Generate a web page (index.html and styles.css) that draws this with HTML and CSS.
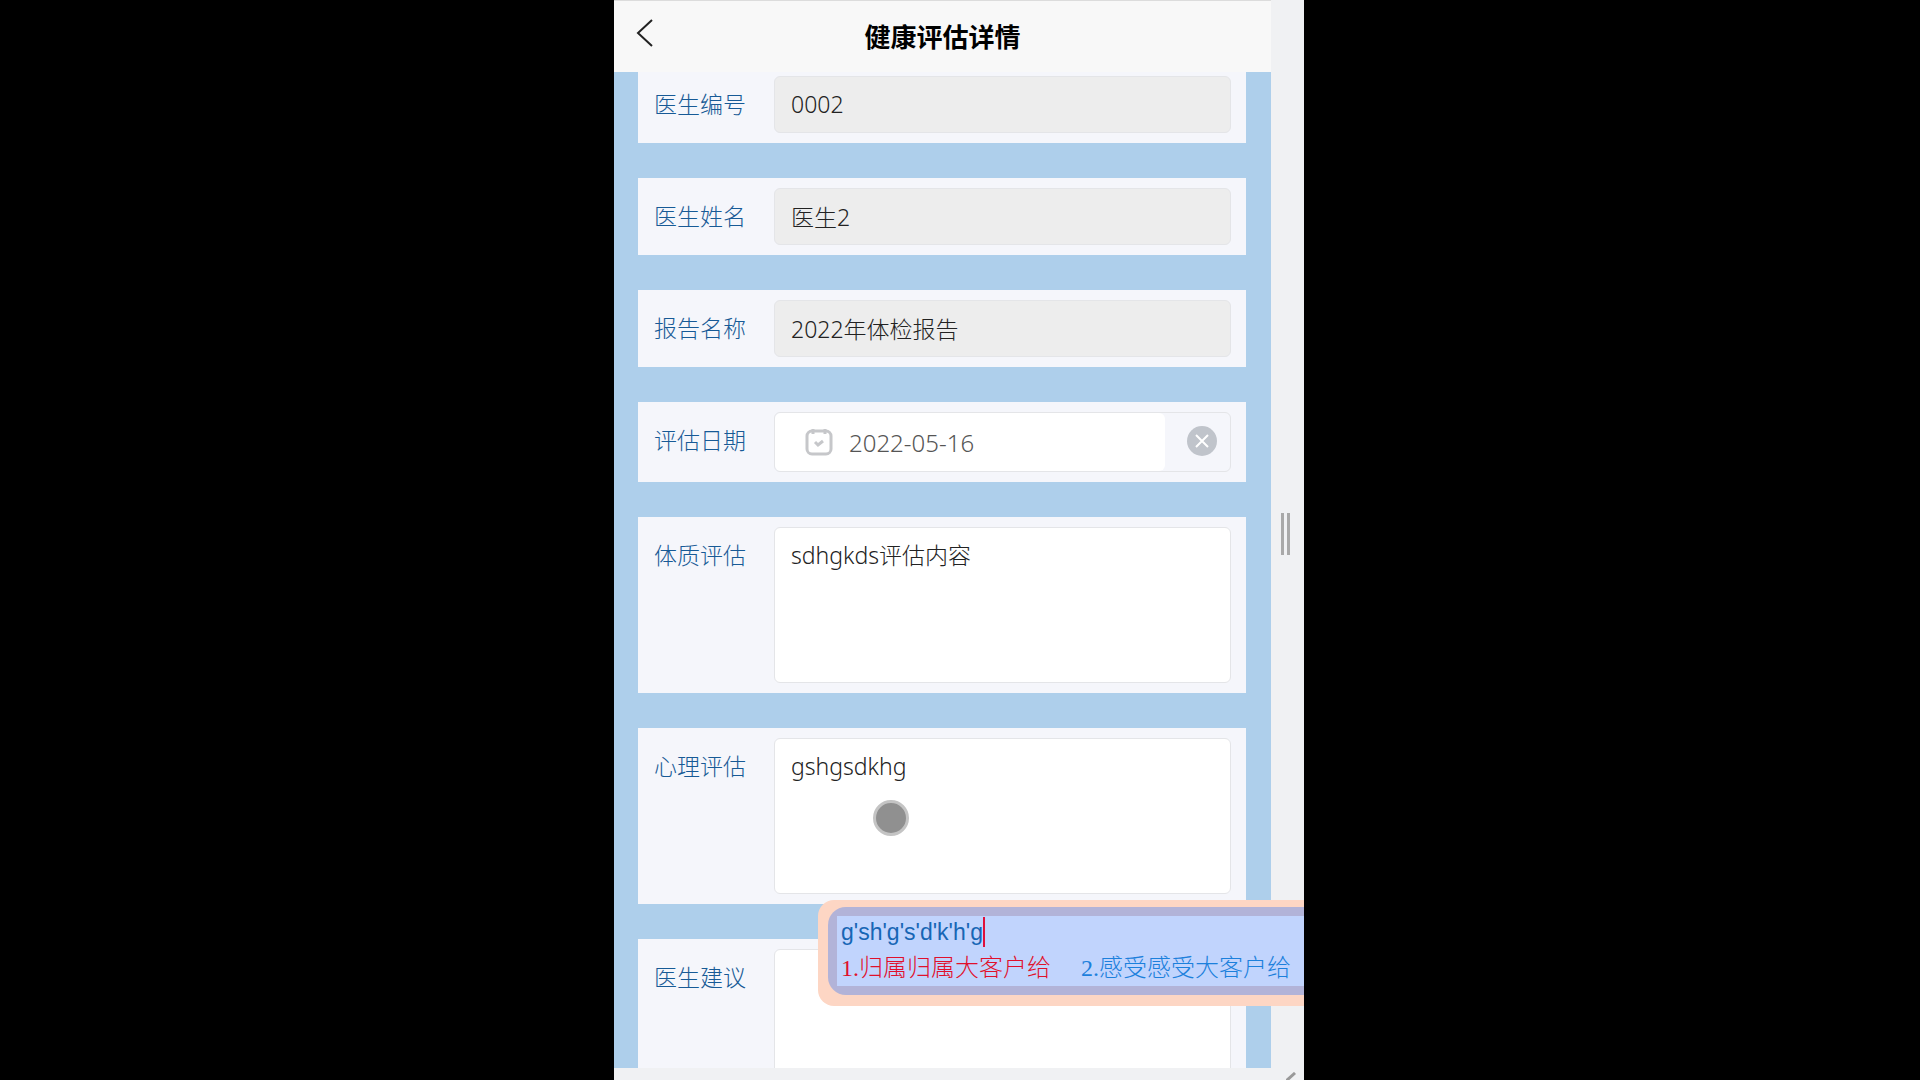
FILE: index.html
```html
<!DOCTYPE html>
<html lang="zh-CN">

<head>
    <meta charset="UTF-8">
    <meta name="viewport" content="width=device-width, initial-scale=1.0">
    <title>健康评估详情</title>
    <link rel="stylesheet" href="styles.css">
</head>

<body>
    <div class="device">
        <div class="main">
            <div class="screen">
                <header class="navbar">
                    <button type="button" class="back" aria-label="返回">
                        <svg width="18" height="30" viewBox="0 0 18 30"><path d="M16 2 L2 15 L16 28" /></svg>
                    </button>
                    <h1>健康评估详情</h1>
                </header>

                <form class="form">
                    <div class="row row-cut">
                        <label for="doctorNo">医生编号</label>
                        <input type="text" id="doctorNo" class="field" value="0002" readonly>
                    </div>
                    <div class="row">
                        <label for="doctorName">医生姓名</label>
                        <input type="text" id="doctorName" class="field" value="医生2" readonly>
                    </div>
                    <div class="row">
                        <label for="reportName">报告名称</label>
                        <input type="text" id="reportName" class="field" value="2022年体检报告" readonly>
                    </div>
                    <div class="row">
                        <label for="evalDate">评估日期</label>
                        <div class="date">
                            <div class="date-value">
                                <svg class="calendar" width="28" height="28" viewBox="0 0 28 28">
                                    <rect x="2" y="3" width="24" height="23" rx="5" />
                                    <path d="M8 1 V6 M20 1 V6 M10 14 L13 17 L18 13" />
                                </svg>
                                <input type="text" id="evalDate" value="2022-05-16">
                            </div>
                            <button type="button" class="clear" aria-label="清除">
                                <svg width="30" height="30" viewBox="0 0 30 30">
                                    <circle cx="15" cy="15" r="15" />
                                    <path d="M9 9 L21 21 M21 9 L9 21" />
                                </svg>
                            </button>
                        </div>
                    </div>
                    <div class="row">
                        <label for="bodyEval">体质评估</label>
                        <textarea id="bodyEval" class="field">sdhgkds评估内容</textarea>
                    </div>
                    <div class="row">
                        <label for="mindEval">心理评估</label>
                        <textarea id="mindEval" class="field">gshgsdkhg</textarea>
                    </div>
                    <div class="row">
                        <label for="advice">医生建议</label>
                        <textarea id="advice" class="field"></textarea>
                    </div>
                </form>
            </div>
            <div class="rail">
                <span class="bar"></span>
                <span class="bar"></span>
            </div>
        </div>
        <div class="bottom">
            <svg width="10" height="8" viewBox="0 0 10 8"><path d="M0 9 L9 1" /></svg>
        </div>

        <!-- touch point -->
        <span class="touch"></span>

        <!-- input method window -->
        <div class="ime">
            <div class="ime-inner">
                <div class="pinyin">g'sh'g's'd'k'h'g</div>
                <div class="candidates">
                    <button type="button" class="active">1.归属归属大客户给</button>
                    <button type="button">2.感受感受大客户给</button>
                </div>
            </div>
        </div>
    </div>
</body>

</html>
```
FILE: styles.css
```css
* {
    box-sizing: border-box;
}
body {
    margin: 0;
    padding-right: 2px;
    background-color: #000;
    font-family: "Noto Sans", "Noto Sans CJK SC", sans-serif;
    font-size: 23px;
}
input, textarea, button {
    font-family: inherit;
    font-size: inherit;
    margin: 0;
}
button {
    padding: 0;
    border: none;
    background: none;
    cursor: pointer;
}
svg {
    display: block;
    fill: none;
}
.device {
    position: relative;
    display: flex;
    flex-direction: column;
    max-width: 690px;
    height: 100vh;
    margin: 0 auto;
    overflow: hidden;
    background-color: #f0f1f3;
}
.main {
    flex: 1;
    min-height: 0;
    display: flex;
}
.screen {
    flex: 1;
    min-width: 0;
    display: flex;
    flex-direction: column;
    overflow: hidden;
    background-color: #aecfeb;
}

/* header */
.navbar {
    flex: none;
    display: grid;
    grid-template-columns: 64px 1fr 64px;
    align-items: center;
    height: 72px;
    border-top: 1px solid #dcdcdc;
    background-color: #f8f8f8;
}
.back {
    padding: 0 0 8px 22px;
}
.back path {
    stroke: #222;
    stroke-width: 2;
}
h1 {
    margin: 0;
    font-size: 26px;
    line-height: 36px;
    font-weight: bold;
    text-align: center;
    color: #000;
}

/* form */
.form {
    display: flex;
    flex-direction: column;
    gap: 35px;
    padding: 0 25px 0 24px;
}
.row {
    display: flex;
    align-items: flex-start;
    padding: 10px 15px 10px 16px;
    background-color: #f5f6fb;
}
.row-cut {
    padding-top: 4px;
}
label {
    flex: none;
    width: 120px;
    line-height: 56px;
    font-weight: 300;
    color: #175a96;
}
.field {
    flex: 1;
    min-width: 0;
    height: 57px;
    padding: 0 16px 2px;
    border: 1px solid #e4e5e8;
    border-radius: 6px;
    outline: none;
    background-color: #fff;
    font-weight: 300;
    color: #222;
}
input.field {
    background-color: #ededed;
}
textarea.field {
    height: 156px;
    padding: 10px 16px;
    line-height: 34px;
    resize: none;
}
.date {
    flex: 1;
    min-width: 0;
    display: flex;
    height: 60px;
    border: 1px solid #e4e5e8;
    border-radius: 6px;
}
.date-value {
    flex: 1;
    min-width: 0;
    display: flex;
    align-items: center;
    gap: 16px;
    padding-left: 30px;
    border-radius: 6px;
    background-color: #fff;
}
.date-value input {
    flex: 1;
    min-width: 0;
    padding: 0;
    border: none;
    outline: none;
    background: none;
    font-size: 24px;
    font-weight: 300;
    color: #555;
}
.calendar {
    flex: none;
    stroke: #c6c7ca;
    stroke-width: 3;
}
.clear {
    padding: 0 13px 2px 22px;
}
.clear circle {
    fill: #c0c4cb;
}
.clear path {
    stroke: #fff;
    stroke-width: 2;
}

/* side rail and bottom strip */
.rail {
    flex: none;
    display: flex;
    justify-content: center;
    align-items: center;
    gap: 3px;
    width: 33px;
    padding-right: 4px;
}
.bar {
    width: 3px;
    height: 42px;
    background-color: #a9a9a9;
}
.bottom {
    flex: none;
    display: flex;
    justify-content: flex-end;
    align-items: flex-end;
    height: 12px;
    padding-right: 8px;
}
.bottom path {
    stroke: #999;
    stroke-width: 3;
}

/* things lying over the page */
.touch {
    position: absolute;
    top: 800px;
    left: 259px;
    width: 36px;
    height: 36px;
    border: 3px solid #c4c4c4;
    border-radius: 50%;
    background-color: #909090;
}
.ime {
    position: absolute;
    top: 900px;
    left: 204px;
    right: 0;
    padding: 7px 0 11px 10px;
    border-radius: 16px 0 0 16px;
    background-color: #fdd6c4;
}
.ime-inner {
    display: flex;
    flex-direction: column;
    align-items: flex-start;
    padding: 10px 0 6px 13px;
    border-radius: 18px 0 0 18px;
    background: linear-gradient(#c1d4fd, #c1d4fd) 9px 9px / 100% calc(100% - 18px) no-repeat #b2b3d8;
}
.pinyin {
    height: 30px;
    border-right: 2px solid #e0103a;
    font-family: "Liberation Sans", sans-serif;
    font-size: 23px;
    line-height: 30px;
    color: #1766b5;
}
.candidates {
    display: flex;
    gap: 30px;
    white-space: nowrap;
}
.candidates button {
    font-family: "Liberation Serif", "Noto Sans CJK SC", serif;
    font-size: 24px;
    font-weight: 300;
    line-height: 42px;
    color: #1c80dc;
}
.candidates .active {
    color: #e0102c;
}
```
